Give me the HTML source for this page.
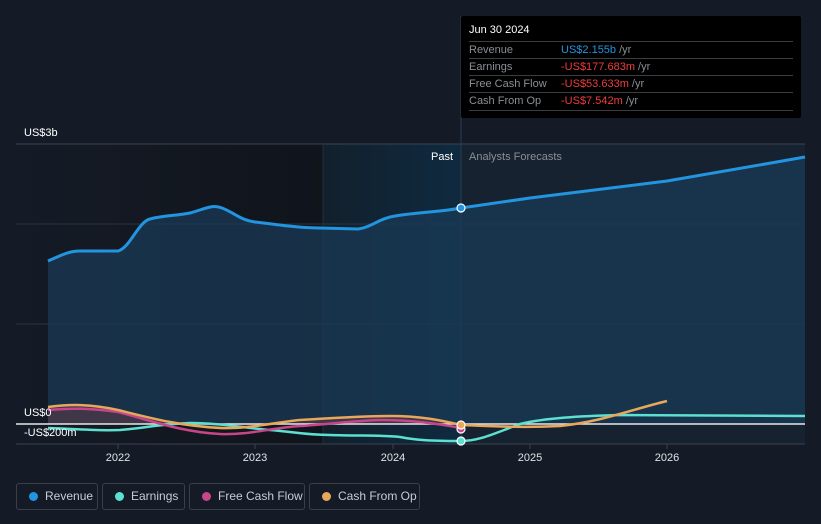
<!DOCTYPE html>
<html><head><meta charset="utf-8">
<style>
html,body{margin:0;padding:0;background:#151b26;width:821px;height:524px;overflow:hidden;font-family:"Liberation Sans",sans-serif;}
svg{position:absolute;left:0;top:0}
.tt{position:absolute;left:461px;top:16px;width:340px;height:102px;background:#000;border-radius:2px;}
.tt .h{position:absolute;left:8px;top:8px;color:#fff;font-size:11px}
.tt .r{position:absolute;left:8px;width:324px;border-top:1px solid #3a3d42;height:17px;font-size:11px;line-height:17px;color:#8a8e95}
.tt .r span{position:absolute;left:92px}
.leg{position:absolute;top:483px;height:27px;border:1px solid #3a3f48;border-radius:3px;box-sizing:border-box;color:#c9ccd1;font-size:12px;line-height:25px}
.leg i{position:absolute;left:12px;top:8px;width:9px;height:9px;border-radius:50%}
.leg b{font-weight:normal;position:absolute;left:28px;white-space:nowrap}
</style></head><body>
<svg width="821" height="524" viewBox="0 0 821 524">
<defs>
<linearGradient id="dk" x1="0" x2="1"><stop offset="0" stop-color="#151b26"/><stop offset="1" stop-color="#10141b"/></linearGradient>
<linearGradient id="pb" x1="0" x2="1"><stop offset="0" stop-color="#12202c"/><stop offset="1" stop-color="#0f2a40"/></linearGradient>
</defs>
<rect x="16" y="144" width="307" height="300" fill="url(#dk)"/>
<rect x="323" y="144" width="138" height="300" fill="url(#pb)"/>
<rect x="461" y="144" width="344" height="300" fill="#172230"/>
<line x1="16" y1="144" x2="805" y2="144" stroke="#3a4250"/>
<line x1="16" y1="224" x2="805" y2="224" stroke="#2a3340"/>
<line x1="16" y1="324" x2="805" y2="324" stroke="#2a3340"/>
<line x1="323" y1="144" x2="323" y2="444" stroke="#22303e"/>
<line x1="461" y1="16" x2="461" y2="444" stroke="#2a3c50"/>
<!-- revenue -->
<path d="M48,261 C60,256 68,251 80,251 L118,251 C130,248 138,222 150,219 C165,215 175,216 190,213 C205,209 212,204 222,208 C235,213 240,220 255,222 C280,225 300,228 320,228 L358,229 C370,228 380,218 395,216 C420,212 440,212 461,208 L530,198 L667,181 C720,172 760,165 805,157 L805,424 L48,424Z" fill="#1a3a55" opacity="0.75"/>
<path d="M48,261 C60,256 68,251 80,251 L118,251 C130,248 138,222 150,219 C165,215 175,216 190,213 C205,209 212,204 222,208 C235,213 240,220 255,222 C280,225 300,228 320,228 L358,229 C370,228 380,218 395,216 C420,212 440,212 461,208 L530,198 L667,181 C720,172 760,165 805,157" fill="none" stroke="#2394df" stroke-width="3"/>
<!-- fills -->
<path d="M48,407 C70,404 90,404 118,410 C150,418 180,426 220,428 C260,429 290,422 330,419 C360,417 380,415 400,416 C430,418 445,421 461,425 L461,424 L48,424Z" fill="#5a3a48" opacity="0.6"/>
<!-- zero line -->
<line x1="16" y1="424" x2="805" y2="424" stroke="#e8e8e8" stroke-width="1.5"/>
<line x1="16" y1="444" x2="805" y2="444" stroke="#3a4250"/>
<!-- earnings -->
<path d="M48,428 C80,429 100,431 120,430 C145,428 160,424 190,423 C220,423 245,428 270,430 C295,432 305,435 330,435 C360,436 385,435 400,437 C415,440 430,441 461,441 C480,441 495,433 520,424 C545,418 580,416 620,415 L805,416" fill="none" stroke="#5ce0cf" stroke-width="2.5"/>
<!-- FCF -->
<path d="M48,410 C70,408 90,408 118,412 C150,420 180,432 220,434 C250,435 270,428 300,426 C330,424 350,421 380,420 C410,420 440,424 461,428" fill="none" stroke="#c7468a" stroke-width="2.5"/>
<!-- CFO -->
<path d="M48,407 C70,404 90,404 118,410 C150,418 180,426 220,428 C250,429 270,423 300,420 C330,418 360,416 390,416 C420,416 440,420 461,425 C490,426 520,428 560,426 C600,422 630,410 667,401" fill="none" stroke="#e8a85c" stroke-width="2.5"/>
<circle cx="461" cy="208" r="4" fill="#2394df" stroke="#fff" stroke-width="1.2"/>
<circle cx="461" cy="441" r="4" fill="#5ce0cf" stroke="#fff" stroke-width="1.2"/>
<circle cx="461" cy="429" r="4" fill="#c7468a" stroke="#fff" stroke-width="1.2"/>
<circle cx="461" cy="425" r="4" fill="#e8a85c" stroke="#fff" stroke-width="1.2"/>
<g font-size="11" fill="#fff">
<text x="24" y="136">US$3b</text>
<text x="24" y="416">US$0</text>
<text x="24" y="436">-US$200m</text>
<text x="453" y="160" text-anchor="end">Past</text>
<text x="469" y="160" fill="#8a8e95">Analysts Forecasts</text>
</g>
<g font-size="11" fill="#e0e2e6" text-anchor="middle">
<line x1="118" y1="444" x2="118" y2="449" stroke="#3a4250"/><text x="118" y="461">2022</text>
<line x1="255" y1="444" x2="255" y2="449" stroke="#3a4250"/><text x="255" y="461">2023</text>
<line x1="393" y1="444" x2="393" y2="449" stroke="#3a4250"/><text x="393" y="461">2024</text>
<line x1="530" y1="444" x2="530" y2="449" stroke="#3a4250"/><text x="530" y="461">2025</text>
<line x1="667" y1="444" x2="667" y2="449" stroke="#3a4250"/><text x="667" y="461">2026</text>
</g>
</svg>
<div class="tt">
<div class="h">Jun 30 2024</div>
<div class="r" style="top:25px">Revenue<span><font color="#2394df">US$2.155b</font> /yr</span></div>
<div class="r" style="top:42px">Earnings<span><font color="#ee3d3d">-US$177.683m</font> /yr</span></div>
<div class="r" style="top:59px">Free Cash Flow<span><font color="#ee3d3d">-US$53.633m</font> /yr</span></div>
<div class="r" style="top:76px;border-bottom:1px solid #3a3d42">Cash From Op<span><font color="#ee3d3d">-US$7.542m</font> /yr</span></div>
</div>
<div class="leg" style="left:16px;width:82px"><i style="background:#2394df"></i><b>Revenue</b></div>
<div class="leg" style="left:102px;width:83px"><i style="background:#5ce0cf"></i><b>Earnings</b></div>
<div class="leg" style="left:189px;width:116px"><i style="background:#c7468a"></i><b>Free Cash Flow</b></div>
<div class="leg" style="left:309px;width:111px"><i style="background:#e8a85c"></i><b>Cash From Op</b></div>
</body></html>
